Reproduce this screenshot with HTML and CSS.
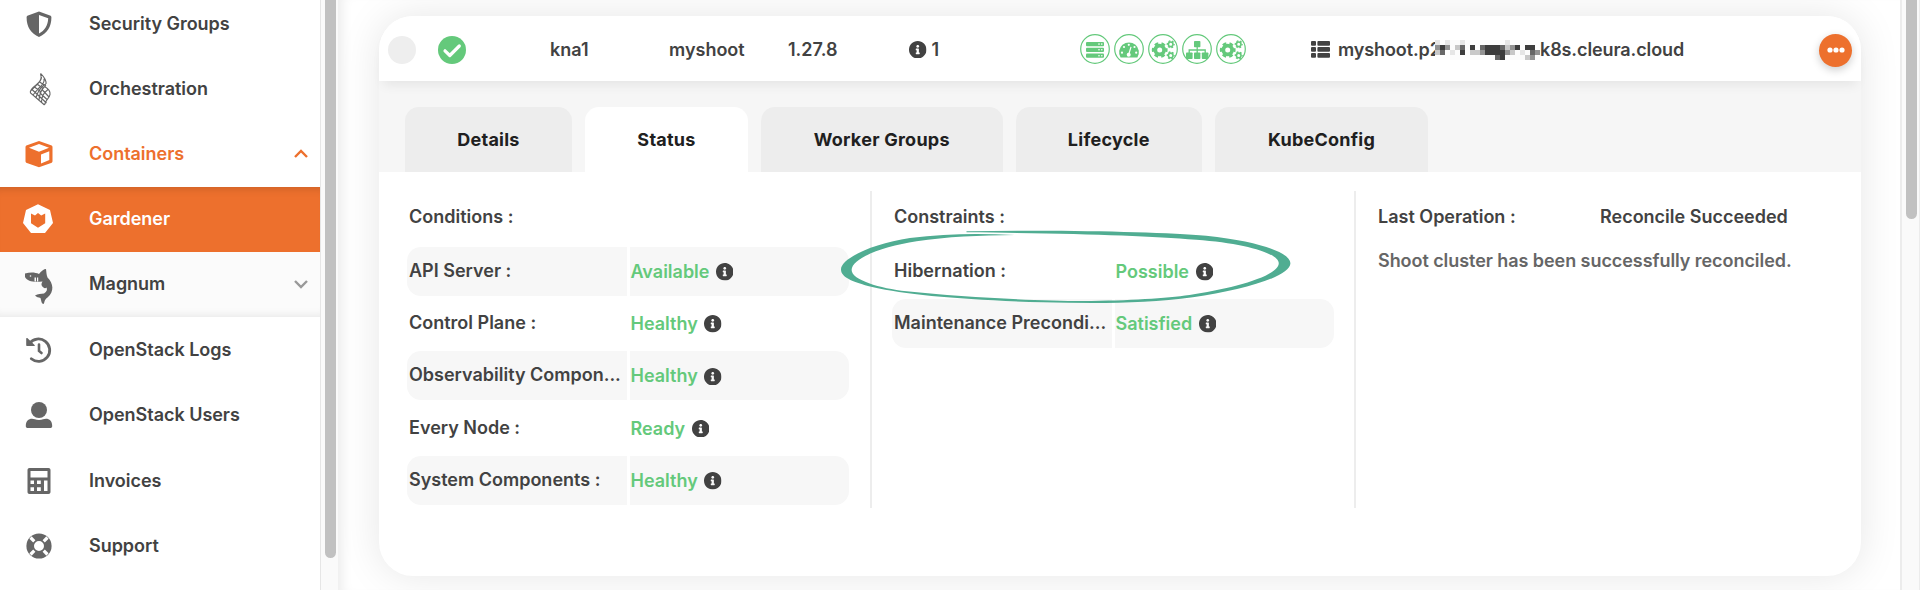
FILE: index.html
```html
<!DOCTYPE html>
<html lang="en">
<head>
<meta charset="utf-8">
<title>Gardener shoots</title>
<link rel="stylesheet" href="styles.css">
</head>
<body>
<svg class="defs" width="0" height="0" aria-hidden="true">
  <symbol id="info" viewBox="8 8 496 496"><path d="M256 8C119.043 8 8 119.083 8 256c0 136.997 111.043 248 248 248s248-111.003 248-248C504 119.083 392.957 8 256 8zm0 110c23.196 0 42 18.804 42 42s-18.804 42-42 42-42-18.804-42-42 18.804-42 42-42zm56 254c0 6.627-5.373 12-12 12h-88c-6.627 0-12-5.373-12-12v-24c0-6.627 5.373-12 12-12h12v-64h-12c-6.627 0-12-5.373-12-12v-24c0-6.627 5.373-12 12-12h64c6.627 0 12 5.373 12 12v100h12c6.627 0 12 5.373 12 12v24z"/></symbol>
  <symbol id="gears" viewBox="0 0 30 30">
    <circle cx="15" cy="15" r="14.3" fill="none" stroke="currentColor" stroke-width="1.2"/>
    <g fill="none" stroke="currentColor">
      <circle cx="11.7" cy="16" r="4.400" stroke-width="3.800"/>
      <circle cx="11.7" cy="16" r="6.800" stroke-width="2.200" stroke-dasharray="3.900 3.220" stroke-dashoffset="1.950"/>
      <circle cx="22.7" cy="10.3" r="2.3" stroke-width="1.6"/>
      <circle cx="22.7" cy="10.3" r="3.4" stroke-width="1.3" stroke-dasharray="1.9 1.66" stroke-dashoffset=".9"/>
      <circle cx="22.7" cy="21.4" r="2.3" stroke-width="1.6"/>
      <circle cx="22.7" cy="21.4" r="3.4" stroke-width="1.3" stroke-dasharray="1.9 1.66" stroke-dashoffset=".9"/>
    </g>
  </symbol>
</svg>
<div class="app">
  <nav class="sidebar">
    <a class="item"><svg class="icon" viewBox="0 0 30 30"><path fill-rule="evenodd" d="M15 2.500 26 6.600c.9.3 1.400 1 1.400 1.900C27.400 18 23 24.600 15 28 7 24.600 2.600 18 2.600 8.500c0-.9.5-1.600 1.400-1.900zM15 5.900V24.600c5.700-3 8.900-8 9.200-15.300z"/></svg><span>Security Groups</span></a>
    <a class="item"><svg class="icon" viewBox="0 0 30 30"><g fill="none" stroke="currentColor" stroke-width="1.150"><path d="M16.500-.5c3 3 6 5.500 5.500 10.500M16.500-.5c1.500 4.500.5 7.500-3 10.500L6.500 17M17.500 3c0 4-3 6-6 8.500-4 3-6 5-5 7.500L20.500 31M20 4.500c1 4-2 7-5.500 10L9 21M22 10c-3 1-8 6-10 13.500M15.500 8l6.500 4M13 10l6 4.500M10.500 13l6 4.500M8 15.500 22.500 29M20.500 12.500c3.500 2 6 5 5.500 8-.5 4-5 5.500-5.500 10.500M20.500 12.500c-3 3-5 8-5.500 13.500M24 15.500c-4 3-6.500 7-6.500 12.500M15.500 18.500l7.500 7M18 15.500l7 7.500"/></g></svg><span>Orchestration</span></a>
    <a class="item open"><svg class="icon" viewBox="0 0 30 30"><path fill-rule="evenodd" d="M15 2 27 6.200c1 .4 1.500 1 1.500 2V22c0 .9-.5 1.600-1.400 2L15 28.300 2.900 24c-.9-.4-1.400-1.100-1.400-2V8.200c0-1 .5-1.600 1.500-2zM15 5 5 8.700l10 4 10-4zM25.300 12.300 17 15.600v9l8.300-3.500z"/></svg><span>Containers</span><svg class="chev" viewBox="0 0 14 8"><path d="M1 7l6-6 6 6"/></svg></a>
    <a class="item active"><svg class="icon" viewBox="0 0 30 30"><path fill-rule="evenodd" d="M14 .3 26 6 29 19l-8 10H7L-1 19 2 6zM7 9.500v9.700l7 4.500 7.200-4.500V9.500l-4 2L14 9l-3 2.500z"/></svg><span>Gardener</span></a>
    <a class="item sub"><svg class="icon" viewBox="0 0 30 30"><path d="M1 4.500c5-1.500 10-1.500 14 .5 2-3 5-5 7-5 .5 3 .3 5.500 1.500 8.500 6 6 7 14 0 20-2.500 1.500-3 3.500-3.500 6-1 1-2 0-2.500-1.500l-1-4c-2-.5-4-1-5.500-2.500 3-2 6-1.500 9-2 3-2 3.500-4 2.500-6-1.500 1.500-3 .5-4.500-1.500-1-1.500-.5-3 .5-4.500C9.500 13.500 3.500 12.500 1 8z"/><circle cx="6.500" cy="7" r=".8" fill="#fbfbfb"/><path d="M10.500 8.500h1.500v4h-1.500zM13 8.500h1.200v4H13z" fill="#fbfbfb"/></svg><span>Magnum</span><svg class="chev down" viewBox="0 0 14 8"><path d="M1 1l6 6 6-6"/></svg></a>
    <a class="item"><svg class="icon" viewBox="0 0 30 30"><g fill="none" stroke="currentColor" stroke-width="2.800" stroke-linecap="round"><path d="M5.500 8.500a11.200 11.200 0 1 1 1.800 15.200"/><path d="M15 9.500V16l2.500 2" stroke-width="2.600"/></g><path d="M2.200 3.500c0-.6.7-.8 1.100-.4l7.300 6.800c.5.500.2 1.200-.5 1.200H3.200c-.6 0-1-.4-1-1z"/></svg><span>OpenStack Logs</span></a>
    <a class="item"><svg class="icon" viewBox="0 0 30 30"><circle cx="15" cy="10" r="8"/><path d="M1.800 26c0-5 2.700-7.300 6.200-7.300 2 0 3.500 1.200 7 1.200s5-1.200 7-1.200c3.500 0 6.200 2.300 6.200 7.300 0 1.400-.8 2-2.200 2H4c-1.400 0-2.200-.6-2.200-2z"/></svg><span>OpenStack Users</span></a>
    <a class="item"><svg class="icon" viewBox="0 0 30 30"><path fill-rule="evenodd" d="M5.500 2h19c1.200 0 2 .8 2 2v22c0 1.200-.8 2-2 2h-19c-1.200 0-2-.8-2-2V4c0-1.200.8-2 2-2zM6.500 5v6.500h17V5zM6.500 14.500v3.500H10v-3.500zM13 14.500v3.500h3.800v-3.500zM6.500 21.300V25H10v-3.700zM13 21.300V25h3.800v-3.700zM20 14.500V25h3.500V14.500z"/></svg><span>Invoices</span></a>
    <a class="item"><svg class="icon" viewBox="0 0 30 30"><circle cx="15" cy="15" r="8.800" fill="none" stroke="currentColor" stroke-width="7.600"/><g stroke="#fff" stroke-width="3.200"><path d="M6.500 6.500 10.300 10.300M23.500 6.500 19.700 10.300M6.500 23.500 10.300 19.700M23.500 23.500 19.700 19.700"/></g></svg><span>Support</span></a>
  </nav>
  <div class="scroll left"><div class="thumb"></div></div>
  <main class="main">
    <section class="card">
      <header class="row-head">
        <span class="radio"></span>
        <svg class="ok" viewBox="0 0 28 28"><circle cx="14" cy="14" r="14" fill="#64c97b"/><path d="M7 14.800l4.800 4.700 9.500-9.500" fill="none" stroke="#fff" stroke-width="3.200" stroke-linecap="round" stroke-linejoin="round"/></svg>
        <span class="c-region">kna1</span>
        <span class="c-name">myshoot</span>
        <span class="c-ver">1.27.8</span>
        <span class="c-info"><svg class="info"><use href="#info"/></svg>1</span>
        <span class="health">
          <svg viewBox="0 0 30 30"><circle cx="15" cy="15" r="14.300" fill="none" stroke="currentColor" stroke-width="1.200"/><rect x="6" y="8" width="18" height="4.200" rx="1"/><rect x="6" y="13.700" width="18" height="4.200" rx="1"/><rect x="6" y="19.600" width="18" height="4.200" rx="1"/><g fill="#fff"><circle cx="19" cy="10.100" r=".8"/><circle cx="21.800" cy="10.100" r=".8"/><circle cx="19" cy="15.800" r=".8"/><circle cx="21.800" cy="15.800" r=".8"/><circle cx="19" cy="21.700" r=".8"/><circle cx="21.800" cy="21.700" r=".8"/></g></svg>
          <svg viewBox="0 0 30 30"><circle cx="15" cy="15" r="14.300" fill="none" stroke="currentColor" stroke-width="1.200"/><path d="M6.600 23.600a9.900 9.900 0 1 1 16.800 0z"/><g fill="#fff"><circle cx="8" cy="18.700" r="1.100"/><circle cx="10" cy="13" r="1.100"/><circle cx="14.800" cy="10.800" r="1.100"/><circle cx="20.500" cy="13" r="1.100"/><circle cx="22.200" cy="18.700" r="1.100"/><circle cx="14.700" cy="20.800" r="2"/></g><path d="M14.700 20.500 17 12.800" stroke="#fff" stroke-width="1.200"/></svg>
          <svg><use href="#gears"/></svg>
          <svg viewBox="0 0 30 30"><circle cx="15" cy="15" r="14.300" fill="none" stroke="currentColor" stroke-width="1.200"/><rect x="12" y="7" width="6.400" height="6.200" rx=".8"/><rect x="4" y="18.500" width="6.600" height="6.500" rx=".8"/><rect x="12" y="18.500" width="6.400" height="6.500" rx=".8"/><rect x="19.800" y="18.500" width="6.600" height="6.500" rx=".8"/><path d="M15.200 12v8M7.200 19v-3h16v3" fill="none" stroke="currentColor" stroke-width="1.300"/></svg>
          <svg><use href="#gears"/></svg>
        </span>
        <span class="host"><svg class="list" viewBox="0 0 19 17"><rect width="5" height="4.800" rx="1"/><rect x="6.400" width="12.600" height="4.800" rx="1"/><rect y="6" width="5" height="4.800" rx="1"/><rect x="6.400" y="6" width="12.600" height="4.800" rx="1"/><rect y="12" width="5" height="4.800" rx="1"/><rect x="6.400" y="12" width="12.600" height="4.800" rx="1"/></svg><span class="h-a">myshoot.p2</span><svg class="mosaic" viewBox="0 0 21 4" shape-rendering="crispEdges">
          <rect width="21" height="4" fill="#fcfcfc"/>
          <path fill="#e6e6e6" d="M0 0h1v1H0zM2 0h1v1H2zM5 0h1v1H5zM14 0h1v1h-1zM3 2h1v1H3zM17 2h1v1h-1z"/>
          <path fill="#c8c8c8" d="M4 1h1v1H4zM7 2h2v1H7zM14 1h1v1h-1zM15 2h1v1h-1zM18 3h1v1h-1zM0 2h1v1H0z"/>
          <path fill="#929292" d="M0 1h1v1H0zM2 1h1v1H2zM9 2h1v1H9zM14 2h1v1h-1zM15 1h1v1h-1zM19 3h1v1h-1zM20 2h1v1h-1z"/>
          <path fill="#666" d="M1 2h1v1H1zM5 1h1v1H5zM9 1h1v1H9zM13 1h1v1h-1zM12 3h1v1h-1zM19 2h1v1h-1z"/>
          <path fill="#3c3c3c" d="M1 1h1v1H1zM5 2h1v1H5zM7 1h1v1H7zM10 1h3v1h-3zM10 2h4v1h-4zM13 3h1v1h-1zM16 1h1v1h-1zM18 1h2v1h-2z"/>
        </svg><span class="h-b">k8s.cleura.cloud</span></span>
        <button class="more"><svg viewBox="0 0 18 6"><circle cx="3" cy="3" r="2.600"/><circle cx="9" cy="3" r="2.600"/><circle cx="15" cy="3" r="2.600"/></svg></button>
      </header>
      <div class="tabs">
        <div class="tab w1"><span>Details</span></div>
        <div class="tab on w2"><span>Status</span></div>
        <div class="tab w3"><span>Worker Groups</span></div>
        <div class="tab w4"><span>Lifecycle</span></div>
        <div class="tab w5"><span>KubeConfig</span></div>
      </div>
      <div class="cols">
        <div class="col first">
          <h3>Conditions :</h3>
          <div class="kv odd"><div class="k">API Server :</div><div class="v"><span>Available</span><svg class="info"><use href="#info"/></svg></div></div>
          <div class="kv"><div class="k">Control Plane :</div><div class="v"><span>Healthy</span><svg class="info"><use href="#info"/></svg></div></div>
          <div class="kv odd"><div class="k">Observability Compon...</div><div class="v"><span>Healthy</span><svg class="info"><use href="#info"/></svg></div></div>
          <div class="kv"><div class="k">Every Node :</div><div class="v"><span>Ready</span><svg class="info"><use href="#info"/></svg></div></div>
          <div class="kv odd"><div class="k">System Components :</div><div class="v"><span>Healthy</span><svg class="info"><use href="#info"/></svg></div></div>
        </div>
        <div class="col second">
          <h3>Constraints :</h3>
          <div class="kv"><div class="k">Hibernation :</div><div class="v"><span>Possible</span><svg class="info"><use href="#info"/></svg></div></div>
          <div class="kv odd"><div class="k">Maintenance Precondi...</div><div class="v"><span>Satisfied</span><svg class="info"><use href="#info"/></svg></div></div>
        </div>
        <div class="col third">
          <h3><span class="k-last">Last Operation :</span><span>Reconcile Succeeded</span></h3>
          <p>Shoot cluster has been successfully reconciled.</p>
        </div>
      </div>
    </section>
  </main>
  <div class="scroll right"><div class="thumb"></div></div>
</div>
<svg class="marker" viewBox="0 0 1568 600" preserveAspectRatio="none"><path d="M410 154C700 148 1000 156 1130 167C1300 185 1383 220 1383 250C1383 290 1240 330 1090 352C950 371 800 371 640 367C400 360 230 345 130 322C60 305 33 290 33 268C33 235 130 190 240 174C350 160 450 160 555 165C450 166 350 170 260 184C160 199 65 235 65 270C65 300 150 325 230 334C400 352 620 362 760 363C900 362 1010 355 1080 345C1200 328 1348 290 1348 250C1348 220 1250 190 1100 179C950 167 750 160 410 157Z"/></svg>
</body>
</html>
```
FILE: styles.css
```css
* { box-sizing: border-box; }
body {
  margin: 0;
  height: 590px;
  overflow: hidden;
  position: relative;
  font-family: Inter, "Liberation Sans", sans-serif;
  font-size: 18px;
  font-weight: 600;
  line-height: 22px;
  letter-spacing: 0;
  color: #424242;
  background: #fff;
}
svg { display: block; fill: currentColor; flex: none; }
.defs { position: absolute; }
span, .k, p, h3 { white-space: nowrap; }
.app { display: flex; height: 590px; }

.sidebar { width: 320px; flex: none; margin-top: -9px; height: 599px; letter-spacing: -.03px; }
.item { display: flex; align-items: center; height: 65.3px; padding-left: 24px; }
.icon { width: 30px; height: 30px; color: #666; margin-right: 35px; overflow: visible; }
.item.open, .item.open .icon { color: #ed702d; }
.item.active { background: #ed702d; color: #fff; box-shadow: inset 0 9px 10px -8px rgba(0,0,0,.16); padding-bottom: 1px; }
.item.active .icon { color: #fff; }
.item.sub { background: #fbfbfb; box-shadow: inset 0 -9px 10px -8px rgba(0,0,0,.09); padding-bottom: 1px; }
.chev { width: 14px; height: 8px; margin-left: auto; margin-right: 12.5px; fill: none; stroke: #ed702d; stroke-width: 2.4; overflow: visible; }
.chev.down { stroke: #999; }

.scroll { flex: none; background: #fafafa; height: 590px; }
.scroll.left { width: 18px; border-left: 1px solid #e6e6e6; padding-left: 4px; }
.scroll.right { width: 20px; border-left: 2px solid #ececec; border-right: 1px solid #ececec; padding-left: 4px; }
.thumb { width: 11px; background: #c1c1c1; border-radius: 0 0 6px 6px; }
.left .thumb { height: 558px; }
.right .thumb { height: 219px; }

.main {
  flex: 1;
  overflow: hidden;
  padding: 16px 0 0 41px;
  box-shadow: inset 12px 0 12px -8px rgba(0,0,0,.08);
}
.card { width: 1482px; height: 560px; background: #fff; border-radius: 34px; box-shadow: 0 0 40px rgba(0,0,0,.1); }
.row-head {
  height: 65px;
  display: flex;
  align-items: center;
  position: relative;
  border-radius: 34px 34px 0 0;
  background: #fff;
  box-shadow: 0 8px 12px -4px rgba(0,0,0,.07);
  padding: 2px 9px 0;
}
.radio { width: 28px; height: 28px; border-radius: 50%; background: #eee; }
.ok { width: 28px; height: 28px; margin-left: 22px; margin-top: 1px; }
.c-region { width: 119px; margin-left: 84px; }
.c-name { width: 119px; }
.c-ver { width: 121px; }
.c-info { display: flex; align-items: center; gap: 5px; width: 171px; }
.info { width: 17.500px; height: 17.500px; color: #424242; }
.health { display: flex; gap: 4px; color: #64c97b; width: 231px; margin-top: -1px; }
.health svg { width: 30px; height: 30px; }
.host { display: flex; align-items: center; letter-spacing: -.1px; }
.list { width: 19px; height: 17px; margin-right: 8px; }
.h-a { width: 97px; }
.mosaic { width: 105px; height: 20px; position: relative; }
.more {
  width: 33px; height: 33px; margin-left: auto; margin-top: 1px; padding: 0;
  border: 0; border-radius: 50%; background: #ed702d; color: #fff;
  display: grid; place-items: center; box-shadow: 0 3px 8px rgba(0,0,0,.2);
}
.more svg { width: 18px; height: 6px; }

.tabs { height: 91px; background: #f6f6f6; padding: 26px 26px 0; display: flex; gap: 13px; color: #202020; font-weight: 700; letter-spacing: .25px; }
.tab { height: 65px; background: #ededed; border-radius: 14px 14px 0 0; display: grid; place-items: center; }
.tab.on { background: #fff; }
.w1 { width: 167px; }
.w2 { width: 163px; }
.w3 { width: 241.500px; }
.w4 { width: 186.500px; }
.w5 { width: 213px; }

.cols { display: flex; padding: 19px 0 0 28px; }
.col { height: 317px; padding-top: 15px; }
.first { width: 464.500px; border-right: 2px solid #ededed; }
.second { width: 484px; border-right: 2px solid #ededed; padding-left: 20.500px; }
.third { padding-left: 22.500px; }
h3 { margin: 0 0 19px; padding-left: 2px; font: inherit; height: 22px; }
.third h3 { padding: 0; display: flex; margin-bottom: 22px; }
.k-last { width: 222px; }
p { margin: 0; color: #666; letter-spacing: -.06px; }
.kv { display: grid; grid-template-columns: 220px 219.5px; gap: 2.500px; height: 49px; margin-bottom: 3.200px; }
.k, .v { display: flex; align-items: center; padding-left: 2px; }
.k { border-radius: 14px 0 0 14px; padding-bottom: 1px; }
.v { padding-top: 1px; padding-left: 1px; gap: 6.500px; color: #64c97b; border-radius: 0 14px 14px 0; }
.odd .k, .odd .v { background: #f7f7f7; }

.marker { position: absolute; left: 830px; top: 180px; width: 522px; height: 200px; fill: #50ad92; }
```
